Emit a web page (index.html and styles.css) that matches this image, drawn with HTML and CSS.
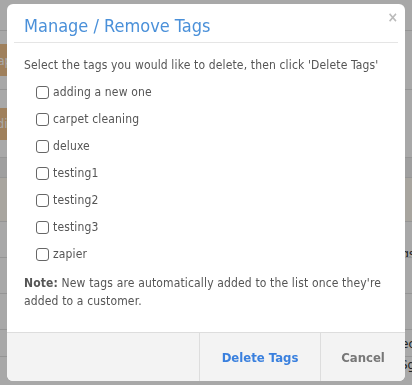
FILE: index.html
```html
<!DOCTYPE html>
<html>
<head>
<meta charset="utf-8">
<link rel="stylesheet" href="styles.css">
</head>
<body>
<div class="page">
  <div class="row r-top"></div>
  <div class="row r-btn"><span class="obtn">Map</span></div>
  <div class="row r-btn2"><span class="obtn">Edit</span></div>
  <div class="row r-head"></div>
  <div class="row r-tan"></div>
  <div class="row r-35"><span class="rt rt-low">Tags</span></div>
  <div class="row r-35"></div>
  <div class="row r-35"></div>
  <div class="row r-27"><span class="rt">Dec</span></div>
  <div class="row r-30"><span class="rt">Sg</span></div>
</div>
<div class="backdrop"></div>
<div class="modal">
  <div class="modal-header">
    <h2 class="modal-title">Manage / Remove Tags</h2>
    <span class="close">&times;</span>
  </div>
  <div class="modal-body">
    <p class="intro">Select the tags you would like to delete, then click 'Delete Tags'</p>
    <ul class="tags">
      <li><label><span class="cb"></span>adding a new one</label></li>
      <li><label><span class="cb"></span>carpet cleaning</label></li>
      <li><label><span class="cb"></span>deluxe</label></li>
      <li><label><span class="cb"></span>testing1</label></li>
      <li><label><span class="cb"></span>testing2</label></li>
      <li><label><span class="cb"></span>testing3</label></li>
      <li><label><span class="cb"></span>zapier</label></li>
    </ul>
    <p class="note"><b>Note:</b> New tags are automatically added to the list once they're added to a customer.</p>
  </div>
  <div class="modal-footer">
    <button class="btn btn-delete">Delete Tags</button>
    <button class="btn btn-cancel">Cancel</button>
  </div>
</div>
</body>
</html>
```
FILE: styles.css
```css
html, body {
  margin: 0;
  padding: 0;
  width: 412px;
  height: 385px;
  overflow: hidden;
  background: #fff;
  font-family: "DejaVu Sans Condensed", "DejaVu Sans", sans-serif;
}
.page {
  display: flex;
  flex-direction: column;
}
.row {
  border-bottom: 1px solid #e2e2e2;
  box-sizing: border-box;
  display: flex;
  align-items: center;
  justify-content: space-between;
  overflow: hidden;
}
.r-top { height: 31px; }
.r-btn { height: 59px; }
.r-btn2 { height: 68px; }
.r-head { height: 20px; background: #f1f1f1; }
.r-tan { height: 44px; background: #fffbf2; }
.r-35 { height: 36px; justify-content: flex-end; }
.r-27 { height: 27px; justify-content: flex-end; }
.r-30 { height: 30px; justify-content: flex-end; align-items: flex-start; }
.obtn {
  background: #f2c38c;
  color: #fff;
  height: 32px;
  width: 50px;
  margin-left: -38px;
  display: flex;
  align-items: center;
  justify-content: flex-end;
  padding-right: 2px;
  font-size: 13px;
}
.rt {
  font-size: 13px;
  color: #333;
  margin-right: -3px;
}
.rt-low { margin-top: 28px; }
.backdrop {
  position: fixed;
  inset: 0;
  background: rgba(0, 0, 0, 0.34);
}
.modal {
  position: absolute;
  top: 4px;
  left: 7px;
  width: 398px;
  height: 377px;
  background: #fff;
  border-radius: 6px;
  overflow: hidden;
  display: flex;
  flex-direction: column;
  color: #555;
}
.modal-header {
  position: relative;
  margin: 0 7px;
  padding: 0 10px;
  height: 38px;
  border-bottom: 1px solid #e5e5e5;
  display: flex;
  align-items: center;
}
.modal-title {
  margin: 0;
  font-weight: normal;
  font-size: 18px;
  color: #4a90d9;
  padding-top: 5px;
}
.close {
  position: absolute;
  right: 0;
  top: 5px;
  font-size: 14px;
  color: #bbb;
  font-weight: bold;
}
.modal-body {
  flex: 1;
  padding: 0 17px;
  letter-spacing: 0.15px;
}
.intro {
  margin: 14px 0 0;
  font-size: 12px;
  line-height: 16px;
}
.tags {
  list-style: none;
  margin: 11px 0 0;
  padding: 0 0 0 12px;
}
.tags li {
  height: 27px;
  font-size: 12px;
}
.tags label {
  display: flex;
  align-items: center;
  gap: 4px;
  height: 16px;
}
.cb {
  width: 11px;
  height: 11px;
  border: 1px solid #666;
  border-radius: 3px;
  background: #fff;
}
.note {
  margin: 1px 0 0;
  font-size: 12px;
  line-height: 18px;
}
.note b { color: #555; }
.modal-footer {
  height: 49px;
  box-sizing: border-box;
  border-top: 1px solid #ddd;
  background: #f3f3f3;
  display: flex;
  justify-content: flex-end;
}
.btn {
  border: 0;
  border-left: 1px solid #ddd;
  background: transparent;
  font-family: inherit;
  font-size: 13px;
  font-weight: bold;
  padding: 0;
}
.btn-delete { width: 121px; color: #3a80de; }
.btn-cancel { width: 85px; color: #777; }
```
